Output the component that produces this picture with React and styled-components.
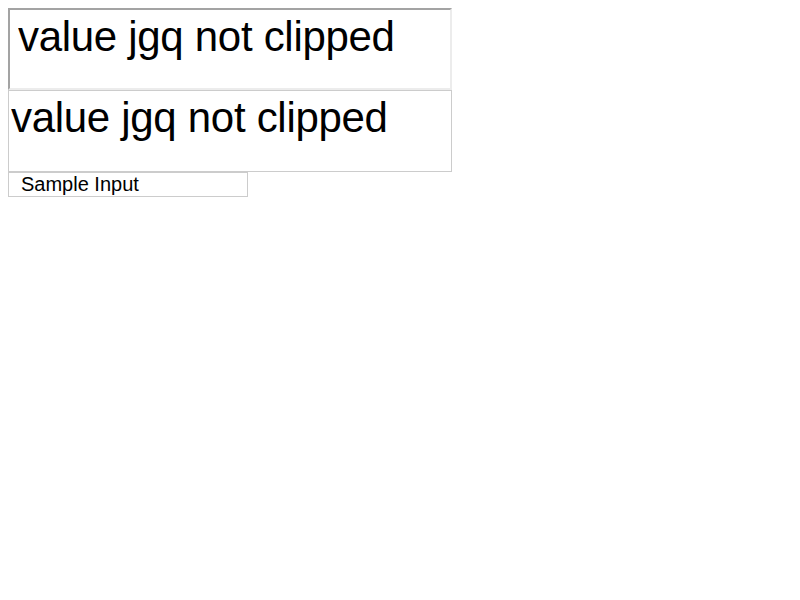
import React from "react";
import styled, { createGlobalStyle } from "styled-components";

const Global = createGlobalStyle`
  body { margin: 8px; background: #fff; font-family: "Liberation Sans", Arial, sans-serif; }
`;

const Stack = styled.div`
  display: flex;
  flex-direction: column;
  align-items: flex-start;
`;

const BigInput = styled.input`
  box-sizing: border-box;
  display: block;
  width: 444px;
  height: 82px;
  margin: 0;
  padding: ${(p) => (p.$flat ? "3px 2px 29px" : "3px 8px 27px")};
  font-family: "Liberation Sans", Arial, sans-serif;
  font-size: 42px;
  line-height: 48px;
  letter-spacing: -0.3px;
  color: #000;
  background: #fff;
  outline: none;
  border-style: solid;
  border-width: ${(p) => (p.$flat ? "1px" : "2px")};
  border-color: ${(p) => (p.$flat ? "#cccccc" : "#a3a3a3 #ececec #ececec #a3a3a3")};
`;

const SmallInput = styled.input`
  box-sizing: border-box;
  display: block;
  width: 240px;
  height: 25px;
  margin: 0;
  padding: 0 12px;
  font-family: "Liberation Sans", Arial, sans-serif;
  font-size: 20px;
  line-height: 23px;
  color: #000;
  background: #fff;
  outline: none;
  border: 1px solid #cccccc;
`;

export default function App() {
  return (
    <>
      <Global />
      <Stack>
        <BigInput defaultValue="value jgq not clipped" />
        <BigInput $flat defaultValue="value jgq not clipped" />
        <SmallInput defaultValue="Sample Input" />
      </Stack>
    </>
  );
}
